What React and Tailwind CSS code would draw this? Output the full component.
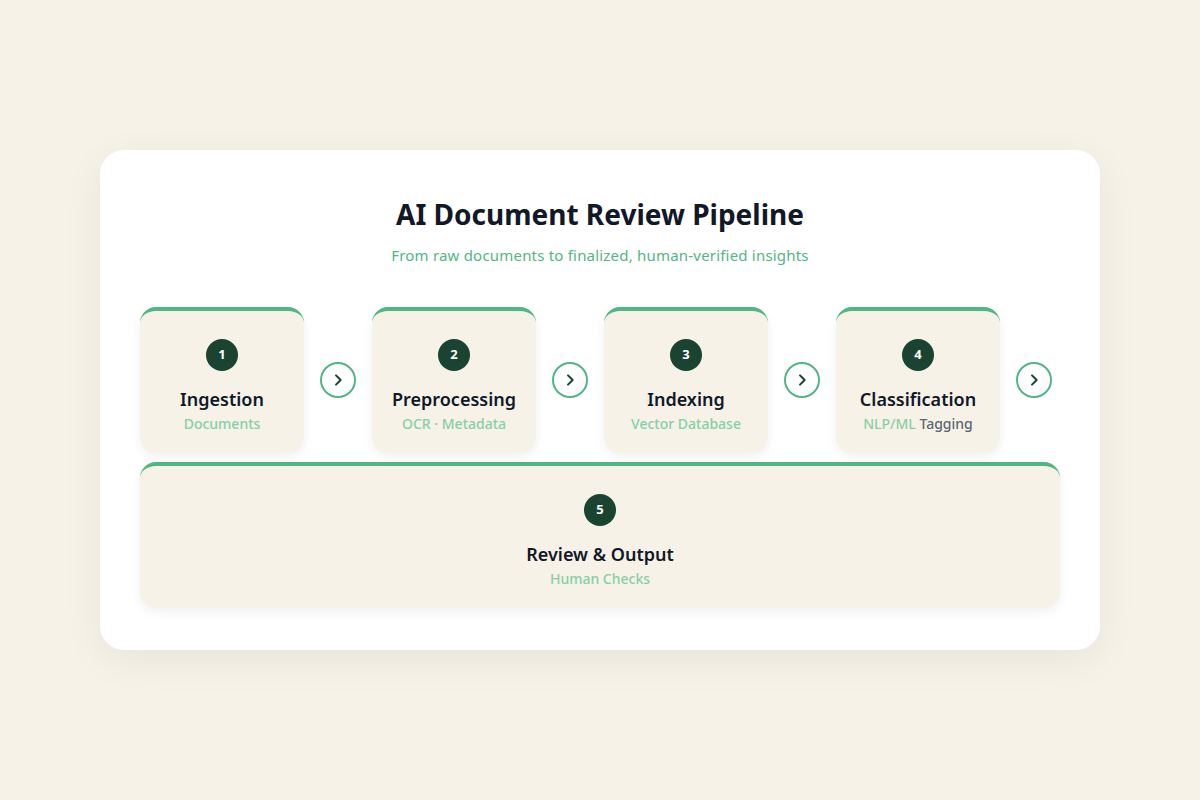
const Step = ({ n, title, children, wide }) => (
  <div
    className={`${wide ? "w-full" : "w-[164px]"} h-[146px] shrink-0 rounded-2xl border-t-4 border-[#52b585] bg-[#f6f2e8] shadow-[0_4px_12px_rgba(0,0,0,0.06)] flex flex-col items-center pt-[28px]`}
  >
    <div className="w-8 h-8 rounded-full bg-[#1b4332] text-white text-[13px] font-bold flex items-center justify-center">
      {n}
    </div>
    <div className="mt-[16px] text-[18px] font-semibold text-[#111827] leading-6">{title}</div>
    <div className="mt-[3px] text-[14px] font-medium text-[#86cfa6] leading-5">{children}</div>
  </div>
);

const Arrow = () => (
  <div className="w-9 h-9 shrink-0 rounded-full border-2 border-[#52b585] bg-white flex items-center justify-center">
    <svg width="16" height="16" viewBox="0 0 24 24" fill="none" stroke="#1b4332" strokeWidth="3" strokeLinecap="round" strokeLinejoin="round">
      <path d="M9 5l7 7-7 7" />
    </svg>
  </div>
);

export default function App() {
  return (
    <div className="min-h-[800px] bg-[#f6f2e7] flex items-center justify-center font-['Inter',sans-serif]">
      <div className="w-[1000px] h-[500px] bg-white rounded-3xl shadow-[0_10px_40px_rgba(0,0,0,0.06)] px-10 pt-[46px]">
        <h1 className="text-center text-[28px] font-bold text-[#111827] leading-9">AI Document Review Pipeline</h1>
        <p className="text-center text-[15px] text-[#52b585] mt-[12px] tracking-[0.2px]">
          From raw documents to finalized, human-verified insights
        </p>
        <div className="mt-[40px] flex items-center gap-4">
          <Step n="1" title="Ingestion">Documents</Step>
          <Arrow />
          <Step n="2" title="Preprocessing">OCR · Metadata</Step>
          <Arrow />
          <Step n="3" title="Indexing">Vector Database</Step>
          <Arrow />
          <Step n="4" title="Classification">
            NLP/ML <span className="text-[#5c6670]">Tagging</span>
          </Step>
          <Arrow />
        </div>
        <div className="mt-[9px]">
          <Step n="5" title="Review &amp; Output" wide>Human Checks</Step>
        </div>
      </div>
    </div>
  );
}
